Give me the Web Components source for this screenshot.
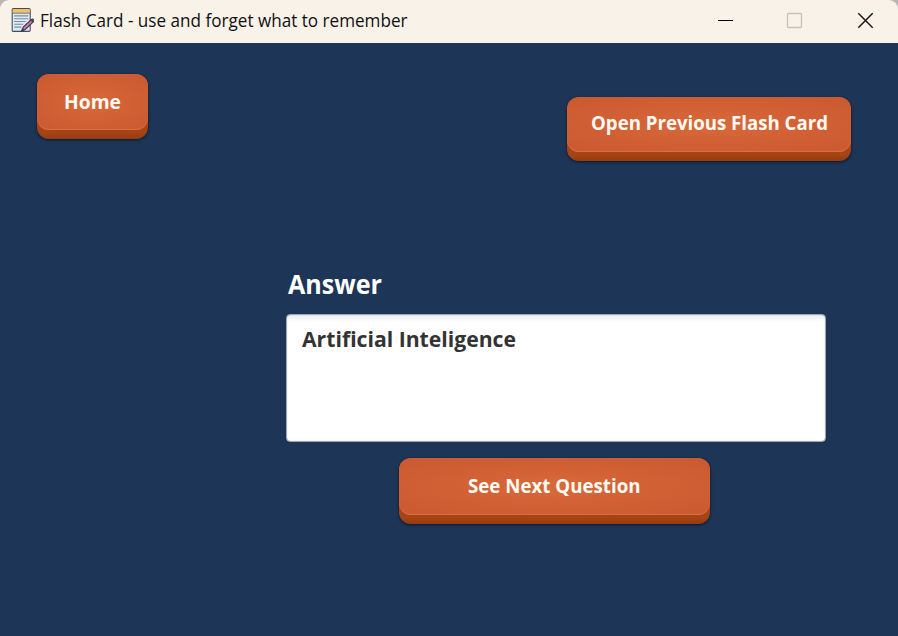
<!DOCTYPE html>
<html lang="en"><head><meta charset="utf-8"><title>Flash Card</title>
<style>html,body{margin:0;height:100%;overflow:hidden;background:#b9b6b5}body{font-family:"Open Sans","Noto Sans",sans-serif}</style></head>
<body><flash-window></flash-window>
<script>
const mount=(el,html)=>{const t=document.createElement('template');t.innerHTML=html;el.attachShadow({mode:'open'}).append(t.content.cloneNode(true));};
/* A single line of text with a fixed advance width and baseline. */
class FitLabel extends HTMLElement{connectedCallback(){
 const g=n=>this.getAttribute(n);
 mount(this,`<style>:host{display:block;width:${g('width')}px;height:${g('height')}px}svg{display:block;overflow:visible}text{fill:currentColor;font-family:inherit;font-size:${g('size')}px;font-weight:${g('weight')||400}}</style>
 <svg width="${g('width')}" height="${g('height')}"><text x="0" y="${g('base')}" textLength="${g('width')}" lengthAdjust="spacingAndGlyphs">${g('text')}</text></svg>`);}}
customElements.define('fit-label',FitLabel);
class NoteIcon extends HTMLElement{connectedCallback(){mount(this,`<style>:host{display:block;width:24px;height:26px}svg{display:block}</style>
<svg width="24" height="26" viewBox="0 0 24 26"><rect x="1.2" y="1.6" width="18" height="22.8" rx="1.2" fill="#dce8f4" stroke="#454c5c" stroke-width="1.1"/><path d="M1.7 2.3h17v3.6h-17z" fill="#f2c35c"/><path d="M1.5 6.2h17.5" stroke="#5a5f68" stroke-width=".8"/><path d="M3.2 8.9h14M3.2 11.7h14M3.2 14.5h11.5M3.2 17.3h9M3.2 20.1h7" stroke="#7d8c9e" stroke-width="1.1"/><path d="M10.5 24.3l1.7-4.2L20.5 12.4l2 2.2-8.2 7.8z" fill="#c881ad" stroke="#393044" stroke-width="1.1" stroke-linejoin="round"/><path d="M19.3 13.4l1.6-1.6q1.2-.7 1.9.3.6 1-.2 1.8l-1.3 1.2zM10.5 24.3l1.3-3.2 1.6 1.5z" fill="#464254"/></svg>`);}}
customElements.define('note-icon',NoteIcon);
class TitleBar extends HTMLElement{connectedCallback(){mount(this,`<style>:host{display:flex;height:43px;background:#f9f2e9;border-radius:9px 9px 0 0;color:#111;box-sizing:border-box;padding:0 24px 0 11px;align-items:flex-start}
note-icon{margin:7px 5px 0 0}.c{display:flex;margin:12px 0 0 auto;gap:52px}svg{display:block}.m{margin-left:-2px}.x{margin-left:2px}</style>
<note-icon></note-icon><slot></slot><div class="c">
<svg width="17" height="17"><path d="M1 8.5h15" stroke="#000" stroke-width="1"/></svg>
<svg width="17" height="17"><rect x="1.5" y="1.5" width="14" height="14" rx="1" fill="none" stroke="#c8c1ba" stroke-width="1.3"/></svg>
<svg class="x" width="17" height="17"><path d="M1.3 1.3l14.4 14.4M15.7 1.3L1.3 15.7" stroke="#1a1a1a" stroke-width="1.5"/></svg></div>`);}}
customElements.define('title-bar',TitleBar);
class RaisedButton extends HTMLElement{connectedCallback(){mount(this,`<style>:host{display:block}
button{appearance:none;border:0;margin:0;padding:0 0 9px;display:block;width:100%;height:100%;border-radius:12px;background:linear-gradient(#a74414 90%,#963b10);box-shadow:0 1px 3px rgba(5,12,25,.75);font:inherit;color:#fffaf3}
.f{display:flex;box-sizing:border-box;height:100%;justify-content:center;align-items:flex-start;padding-top:var(--top,14px);border-radius:12px;background:radial-gradient(ellipse at 50% 50%,#d86a39 0%,#d16035 50%,#cb5930 100%);box-shadow:inset 0 -1px 1px #dc7044}</style><button><span class="f"><slot></slot></span></button>`);}}
customElements.define('raised-button',RaisedButton);
class AnswerCard extends HTMLElement{connectedCallback(){mount(this,`<style>:host{display:block;color:#fff}.box{box-sizing:border-box;width:540px;height:128px;margin-top:12px;padding:9px 14px 9px 15px;border:1px solid #a0a6b1;border-radius:4px;background:linear-gradient(#ececec,#fff 7px);color:#333;box-shadow:inset 0 0 1px #aaa}slot[name=title]::slotted(*){margin-left:2px}</style><slot name="title"></slot><div class="box"><slot></slot></div>`);}}
customElements.define('answer-card',AnswerCard);
class FlashWindow extends HTMLElement{connectedCallback(){mount(this,`<style>:host{display:block;height:636px}
main{box-sizing:border-box;height:593px;background:#1d3557;padding:31px 47px 0 37px}
nav{display:flex;justify-content:space-between;align-items:flex-start;height:196px}
.home{width:111px;height:65px}.open{width:284px;height:64px;margin-top:23px;--top:12px}.next{width:311px;height:65.5px;margin:16px 0 0 362px;--top:14px}
answer-card{margin-left:249px}title-bar fit-label{margin-top:8px}</style>
<title-bar><fit-label text="Flash Card - use and forget what to remember" width="367.5" height="26" base="19" size="18.3"></fit-label></title-bar>
<main><nav><raised-button class="home"><fit-label text="Home" width="57" height="28" base="21" size="19.2" weight="700"></fit-label></raised-button>
<raised-button class="open"><fit-label text="Open Previous Flash Card" width="237" height="28" base="21" size="19.2" weight="700"></fit-label></raised-button></nav>
<answer-card><fit-label slot="title" text="Answer" width="94" height="32" base="24" size="26" weight="700"></fit-label><fit-label text="Artificial Inteligence" width="214" height="30" base="22.5" size="22" weight="700"></fit-label></answer-card>
<raised-button class="next"><fit-label text="See Next Question" width="172.5" height="28" base="21" size="19.2" weight="700"></fit-label></raised-button></main>`);}}
customElements.define('flash-window',FlashWindow);
</script></body></html>
